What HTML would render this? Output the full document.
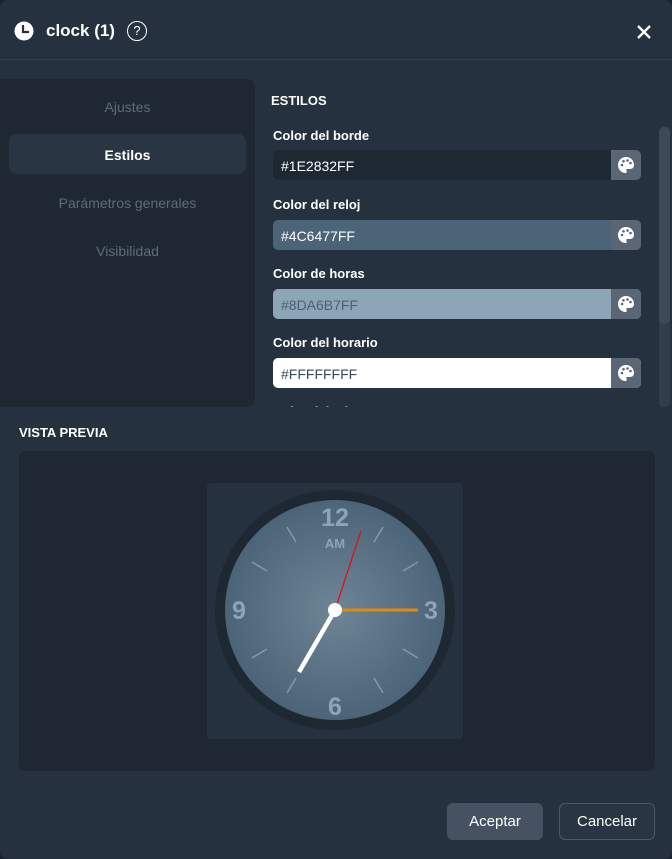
<!DOCTYPE html>
<html><head><style>
*{box-sizing:border-box;margin:0;padding:0}
body{width:672px;height:859px;background:#1b222b;font-family:"Liberation Sans",sans-serif;overflow:hidden;position:relative}
.dlg{position:absolute;left:0;top:0;width:672px;height:859px;background:#263140;border-radius:8px}
.hdr{position:absolute;left:0;top:0;width:672px;height:60px;border-bottom:1px solid #313d4c}
.title{position:absolute;left:46px;top:21px;color:#fff;font-weight:bold;font-size:17px}
.q{position:absolute;left:127px;top:21px;width:20px;height:20px;border:1.5px solid #fff;border-radius:50%;color:#fff;font-size:13px;text-align:center;line-height:17px}
.side{position:absolute;left:0;top:79px;width:255px;height:328px;background:#1f2832;border-radius:0 8px 8px 0}
.si{position:absolute;left:0;width:255px;text-align:center;font-size:14px;color:#5d6b7a}
.sel{position:absolute;left:9px;top:134px;width:237px;height:40px;background:#2a3543;border-radius:8px}
.lab{position:absolute;left:273px;font-size:13px;font-weight:bold;color:#fff}
.inp{position:absolute;left:273px;width:368px;height:30px;border-radius:5px;overflow:hidden;font-size:14px;padding:8px 0 0 8px}
.pb{position:absolute;right:0;top:0;width:30px;height:100%;background:#5a6676}
.pb svg{position:absolute;left:6px;top:6px}
.h2{position:absolute;font-size:13px;font-weight:bold;color:#fff}
.btn{position:absolute;top:803px;width:96px;height:37px;border-radius:6px;color:#fff;font-size:15px;text-align:center;line-height:37px}
</style></head><body>
<div class="dlg">
<div class="hdr">
<svg style="position:absolute;left:14px;top:21px" width="20" height="20" viewBox="0 0 20 20"><circle cx="10" cy="10" r="9.5" fill="#fff"/><path d="M9 4v7h6" stroke="#263140" stroke-width="2.2" fill="none"/></svg>
<div class="title">clock (1)</div><div class="q">?</div>
<svg style="position:absolute;left:637px;top:25px" width="14" height="14" viewBox="0 0 14 14"><path d="M1 1L13 13M13 1L1 13" stroke="#fff" stroke-width="2.4"/></svg>
</div>
<div class="side">
<div class="si" style="top:20px">Ajustes</div>
</div>
<div class="sel"></div>
<div class="si" style="top:147px;color:#fff;font-weight:bold">Estilos</div>
<div class="si" style="top:195px">Parámetros generales</div>
<div class="si" style="top:243px">Visibilidad</div>

<div class="h2" style="left:271px;top:93px">ESTILOS</div>
<div class="lab" style="top:128px">Color del borde</div>
<div class="inp" style="top:150px;background:#1e2832;color:#fff">#1E2832FF<div class="pb"><svg width="18" height="18" viewBox="0 0 18 18"><path d="M9 1C4.5 1 1 4.5 1 9s3.5 8 7.5 8c1.3 0 1.6-1 1-2-.6-1 0-2 1.2-2H13c2.5 0 4-1.8 4-4C17 4.3 13.4 1 9 1z" fill="#fff"/><circle cx="5" cy="9" r="1.3" fill="#5a6676"/><circle cx="6.5" cy="5.3" r="1.3" fill="#5a6676"/><circle cx="10.5" cy="4.5" r="1.3" fill="#5a6676"/><circle cx="13.5" cy="7" r="1.3" fill="#5a6676"/></svg></div></div>
<div class="lab" style="top:197px">Color del reloj</div>
<div class="inp" style="top:220px;background:#4c6477;color:#fff">#4C6477FF<div class="pb"><svg width="18" height="18" viewBox="0 0 18 18"><path d="M9 1C4.5 1 1 4.5 1 9s3.5 8 7.5 8c1.3 0 1.6-1 1-2-.6-1 0-2 1.2-2H13c2.5 0 4-1.8 4-4C17 4.3 13.4 1 9 1z" fill="#fff"/><circle cx="5" cy="9" r="1.3" fill="#5a6676"/><circle cx="6.5" cy="5.3" r="1.3" fill="#5a6676"/><circle cx="10.5" cy="4.5" r="1.3" fill="#5a6676"/><circle cx="13.5" cy="7" r="1.3" fill="#5a6676"/></svg></div></div>
<div class="lab" style="top:266px">Color de horas</div>
<div class="inp" style="top:289px;background:#8da6b7;color:#4c6070">#8DA6B7FF<div class="pb"><svg width="18" height="18" viewBox="0 0 18 18"><path d="M9 1C4.5 1 1 4.5 1 9s3.5 8 7.5 8c1.3 0 1.6-1 1-2-.6-1 0-2 1.2-2H13c2.5 0 4-1.8 4-4C17 4.3 13.4 1 9 1z" fill="#fff"/><circle cx="5" cy="9" r="1.3" fill="#5a6676"/><circle cx="6.5" cy="5.3" r="1.3" fill="#5a6676"/><circle cx="10.5" cy="4.5" r="1.3" fill="#5a6676"/><circle cx="13.5" cy="7" r="1.3" fill="#5a6676"/></svg></div></div>
<div class="lab" style="top:335px">Color del horario</div>
<div class="inp" style="top:358px;background:#fff;color:#3a4a5a">#FFFFFFFF<div class="pb"><svg width="18" height="18" viewBox="0 0 18 18"><path d="M9 1C4.5 1 1 4.5 1 9s3.5 8 7.5 8c1.3 0 1.6-1 1-2-.6-1 0-2 1.2-2H13c2.5 0 4-1.8 4-4C17 4.3 13.4 1 9 1z" fill="#fff"/><circle cx="5" cy="9" r="1.3" fill="#5a6676"/><circle cx="6.5" cy="5.3" r="1.3" fill="#5a6676"/><circle cx="10.5" cy="4.5" r="1.3" fill="#5a6676"/><circle cx="13.5" cy="7" r="1.3" fill="#5a6676"/></svg></div></div>
<div style="position:absolute;left:273px;top:400px;height:7px;overflow:hidden;width:200px"><div class="lab" style="left:0;top:4px">Color del minutero</div></div>
<div style="position:absolute;left:659px;top:127px;width:11px;height:280px;background:#323e4d;border-radius:5px"></div>
<div style="position:absolute;left:659px;top:127px;width:11px;height:197px;background:#3d4958;border-radius:5px"></div>

<div class="h2" style="left:19px;top:425px">VISTA PREVIA</div>
<div style="position:absolute;left:19px;top:451px;width:636px;height:320px;background:#1f2832;border-radius:6px"></div>
<div style="position:absolute;left:207px;top:483px;width:256px;height:256px;background:#263140;border-radius:4px"></div>
<svg style="position:absolute;left:0;top:0" width="672" height="859">
<defs><radialGradient id="g"><stop offset="0" stop-color="#6e8596"/><stop offset="1" stop-color="#4c6477"/></radialGradient></defs>
<circle cx="335" cy="610" r="120" fill="#1e2832"/>
<circle cx="335" cy="610" r="110" fill="url(#g)"/>
<g stroke="#8da6b7" stroke-width="1.5" opacity="0.8">
<line x1="374" y1="542" x2="383" y2="527"/><line x1="403" y1="571" x2="418" y2="562"/>
<line x1="403" y1="649" x2="418" y2="658"/><line x1="374" y1="678" x2="383" y2="693"/>
<line x1="296" y1="678" x2="287" y2="693"/><line x1="267" y1="649" x2="252" y2="658"/>
<line x1="267" y1="571" x2="252" y2="562"/><line x1="296" y1="542" x2="287" y2="527"/>
</g>
<g fill="#8da6b7" font-family="Liberation Sans" font-weight="bold" text-anchor="middle">
<text x="335" y="526" font-size="25">12</text>
<text x="335" y="548" font-size="13">AM</text>
<text x="431" y="619" font-size="25">3</text>
<text x="335" y="715" font-size="25">6</text>
<text x="239" y="619" font-size="25">9</text>
</g>
<line x1="335" y1="610" x2="361" y2="531" stroke="#e0101a" stroke-width="1.3"/>
<line x1="335" y1="610" x2="418" y2="610" stroke="#e08a10" stroke-width="3"/>
<line x1="335" y1="610" x2="299" y2="672" stroke="#fff" stroke-width="4.5"/>
<circle cx="335" cy="610" r="7" fill="#fff"/>
</svg>
<div class="btn" style="left:447px;background:#465262">Aceptar</div>
<div class="btn" style="left:559px;background:#2a3543;border:1px solid #4c5868;line-height:35px">Cancelar</div>
</div>
</body></html>
